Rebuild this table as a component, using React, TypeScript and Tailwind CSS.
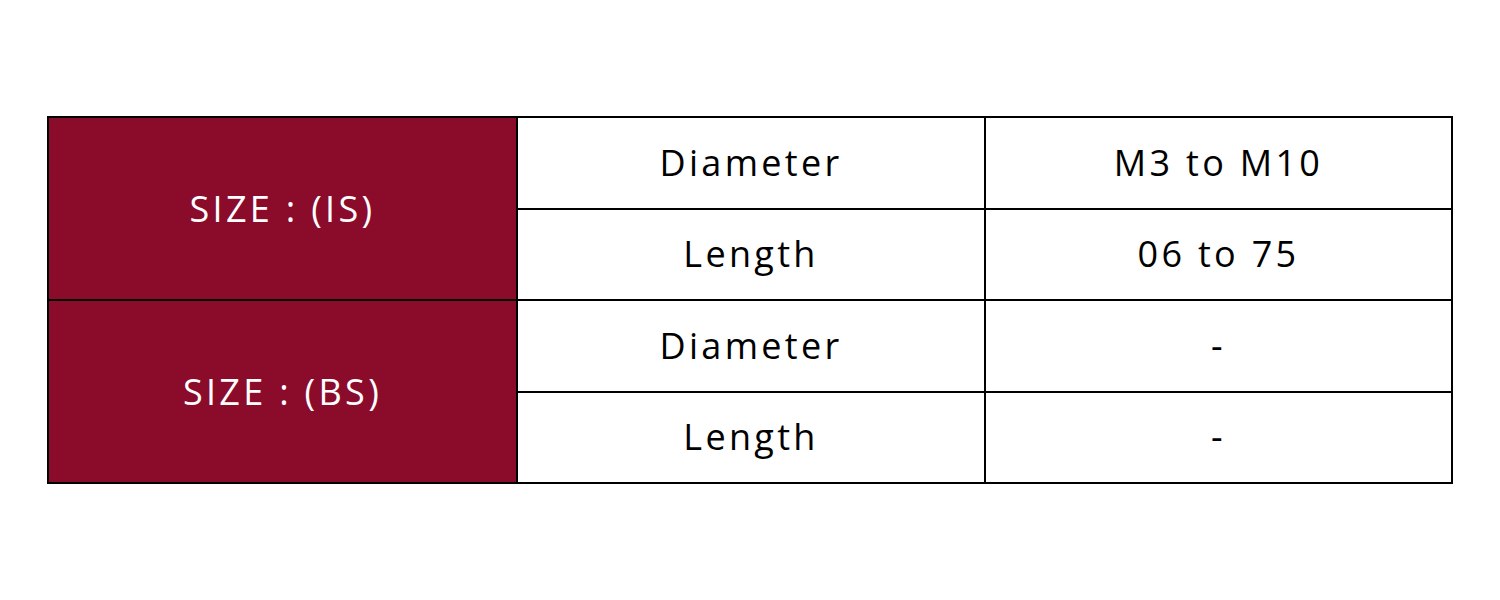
import React from "react";

const rows = [
  { group: "SIZE : (IS)", items: [["Diameter", "M3 to M10"], ["Length", "06 to 75"]] },
  { group: "SIZE : (BS)", items: [["Diameter", "-"], ["Length", "-"]] },
];

export default function App() {
  return (
    <div
      className="w-[1500px] h-[600px] bg-white pt-[116px] pl-[47px]"
      style={{ fontFamily: "'Open Sans', 'Liberation Sans', sans-serif" }}
    >
      <table className="border-collapse w-[1406px] table-fixed text-[36px] tracking-[3.3px] text-black">
        <tbody>
          {rows.map((r) =>
            r.items.map(([label, value], i) => (
              <tr key={r.group + label} className="h-[91.5px]">
                {i === 0 && (
                  <td
                    rowSpan={2}
                    className="border-2 border-black bg-[#8b0b2b] text-white text-center w-[469px]"
                  >
                    {r.group}
                  </td>
                )}
                <td className="border-2 border-black text-center w-[468px]">{label}</td>
                <td className="border-2 border-black text-center">{value}</td>
              </tr>
            ))
          )}
        </tbody>
      </table>
    </div>
  );
}
